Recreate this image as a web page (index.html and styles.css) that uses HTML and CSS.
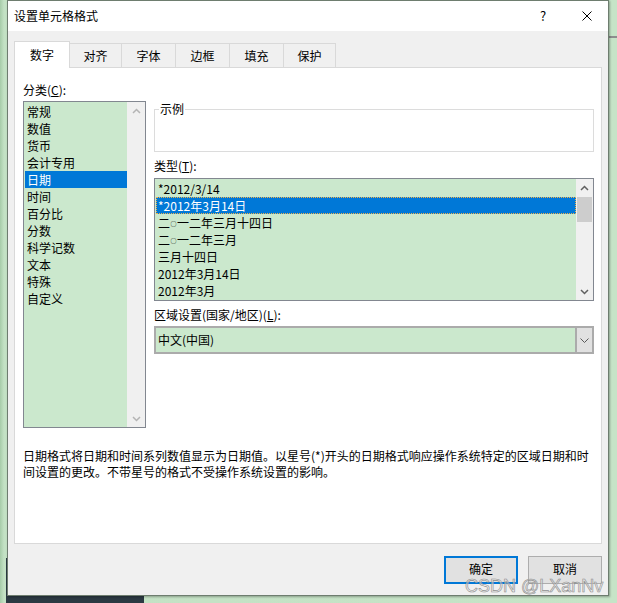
FILE: index.html
```html
<!DOCTYPE html>
<html lang="zh-CN">
<head>
<meta charset="utf-8">
<title>设置单元格格式</title>
<link rel="stylesheet" href="styles.css">
</head>
<body>
<div class="desk">
  <div class="dark-block"></div>
  <div class="side-line"></div>
  <div class="dialog">
    <div class="titlebar">
      <div class="title">设置单元格格式</div>
      <div class="tb-btn tb-help">?</div>
      <div class="tb-btn tb-close">
        <svg width="10" height="10" viewBox="0 0 10 10"><path d="M0.5 0.5 L9.5 9.5 M9.5 0.5 L0.5 9.5" stroke="#000" stroke-width="1" fill="none"/></svg>
      </div>
    </div>
    <div class="main">
      <div class="tabs">
        <div class="tab active">数字</div>
        <div class="tab">对齐</div>
        <div class="tab">字体</div>
        <div class="tab">边框</div>
        <div class="tab">填充</div>
        <div class="tab">保护</div>
      </div>
      <div class="panel">
        <div class="cols">
          <div class="col-left">
            <div class="label">分类(<u>C</u>):</div>
            <div class="listbox cat">
              <div class="items">
                <div class="item">常规</div>
                <div class="item">数值</div>
                <div class="item">货币</div>
                <div class="item">会计专用</div>
                <div class="item sel">日期</div>
                <div class="item">时间</div>
                <div class="item">百分比</div>
                <div class="item">分数</div>
                <div class="item">科学记数</div>
                <div class="item">文本</div>
                <div class="item">特殊</div>
                <div class="item">自定义</div>
              </div>
              <div class="vscroll wide">
                <div class="sb-btn"><svg width="9" height="6" viewBox="0 0 9 6"><polyline points="1,5 4.5,1.5 8,5" fill="none" stroke="#b4b4b4" stroke-width="1.5"/></svg></div>
                <div class="sb-track"></div>
                <div class="sb-btn"><svg width="9" height="6" viewBox="0 0 9 6"><polyline points="1,1 4.5,4.5 8,1" fill="none" stroke="#b4b4b4" stroke-width="1.5"/></svg></div>
              </div>
            </div>
          </div>
          <div class="col-right">
            <fieldset class="sample">
              <legend>示例</legend>
            </fieldset>
            <div class="label gap-top">类型(<u>T</u>):</div>
            <div class="listbox types">
              <div class="items">
                <div class="item">*2012/3/14</div>
                <div class="item sel focus">*2012年3月14日</div>
                <div class="item">二<span class="ring">○</span>一二年三月十四日</div>
                <div class="item">二<span class="ring">○</span>一二年三月</div>
                <div class="item">三月十四日</div>
                <div class="item">2012年3月14日</div>
                <div class="item">2012年3月</div>
              </div>
              <div class="vscroll">
                <div class="sb-btn"><svg width="9" height="6" viewBox="0 0 9 6"><polyline points="1,5 4.5,1.5 8,5" fill="none" stroke="#606060" stroke-width="1.5"/></svg></div>
                <div class="sb-track"><div class="thumb"></div></div>
                <div class="sb-btn"><svg width="9" height="6" viewBox="0 0 9 6"><polyline points="1,1 4.5,4.5 8,1" fill="none" stroke="#606060" stroke-width="1.5"/></svg></div>
              </div>
            </div>
            <div class="label gap-top">区域设置(国家/地区)(<u>L</u>):</div>
            <div class="dropdown">
              <div class="dd-text">中文(中国)</div>
              <div class="dd-btn"><svg width="9" height="5" viewBox="0 0 9 5"><polyline points="0.5,0.5 4.5,4.5 8.5,0.5" fill="none" stroke="#5a5a5a" stroke-width="1"/></svg></div>
            </div>
          </div>
        </div>
        <p class="desc">日期格式将日期和时间系列数值显示为日期值。以星号(*)开头的日期格式响应操作系统特定的区域日期和时间设置的更改。不带星号的格式不受操作系统设置的影响。</p>
      </div>
      <div class="actions">
        <div class="btn default">确定</div>
        <div class="btn">取消</div>
      </div>
    </div>
  </div>
  <div class="watermark">CSDN @LXanNv</div>
</div>
</body>
</html>
```
FILE: styles.css
```css
* { box-sizing: border-box; }

body {
  margin: 0;
  font-family: "Noto Sans CJK SC", "Microsoft YaHei", sans-serif;
  font-size: 12px;
  color: #000;
}

.desk {
  position: relative;
  width: 617px;
  height: 603px;
  overflow: hidden;
  background: linear-gradient(to right, #a6cba8 0, #c3e1c4 4px, #c6e4c7 100%);
}

.dark-block {
  position: absolute;
  left: 6px;
  top: 558px;
  width: 138px;
  height: 45px;
  background: #2b3942;
}

.side-line {
  position: absolute;
  left: 609px;
  top: 36px;
  width: 8px;
  height: 2px;
  background: #8d8d8d;
}

.dialog {
  position: relative;
  z-index: 1;
  margin-left: 7px;
  width: 602px;
  height: 596px;
  background: #f0f0f0;
  border: 1px solid #6e7d6f;
  box-shadow: 1px 1px 2px rgba(0, 0, 0, 0.3);
}

.titlebar {
  height: 30px;
  background: #fff;
  display: flex;
  align-items: center;
}

.title {
  padding-left: 6px;
  line-height: 16px;
}

.tb-btn {
  height: 30px;
  display: flex;
  align-items: center;
  justify-content: center;
  line-height: 16px;
}

.tb-help {
  margin-left: auto;
  width: 46px;
  font-size: 13px;
}

.tb-close {
  width: 42px;
}

.main {
  padding: 10px 6px 0 6px;
}

.tabs {
  display: flex;
  align-items: flex-end;
  height: 27px;
  margin-bottom: -1px;
  position: relative;
  z-index: 2;
}

.tab {
  width: 54px;
  height: 24px;
  margin-bottom: 1px;
  display: flex;
  align-items: center;
  justify-content: center;
  line-height: 16px;
  background: #f0f0f0;
  border-top: 1px solid #d9d9d9;
  border-left: 1px solid #d9d9d9;
}

.tab.active {
  width: 56px;
  height: 27px;
  margin-bottom: 0;
  background: #fff;
  border-right: 1px solid #d9d9d9;
  padding-bottom: 1px;
}

.tab.active + .tab {
  width: 51px;
  border-left: none;
}

.tab:last-child {
  width: 53px;
  border-right: 1px solid #d9d9d9;
}

.panel {
  height: 477px;
  background: #fff;
  border: 1px solid #d9d9d9;
  padding: 13px 6px 0 8px;
}

.cols {
  display: flex;
  gap: 8px;
}

.col-left {
  width: 123px;
}

.col-right {
  width: 440px;
}

.label {
  height: 17px;
  line-height: 17px;
  white-space: nowrap;
}

.label u {
  text-underline-offset: 1px;
}

.gap-top {
  margin-top: 5px;
}

.listbox {
  display: flex;
  border: 1px solid #828790;
  background: #cbe8cd;
}

.listbox.cat {
  margin-top: 3px;
  height: 327px;
}

.listbox.types {
  margin-top: 4px;
  height: 123px;
}

.items {
  flex: 1;
  min-width: 0;
  padding: 1px 0 1px 1px;
}

.item {
  height: 17px;
  line-height: 17px;
  padding-left: 2px;
  white-space: nowrap;
}

.item.sel {
  background: #0078d7;
  color: #fff;
}

.item.focus {
  outline: 1px dotted #f2b24a;
  outline-offset: -1px;
}

.ring {
  font-size: 6px;
  vertical-align: 2px;
  padding: 0 0.5px;
}

.vscroll {
  width: 17px;
  background: #f0f0f0;
  display: flex;
  flex-direction: column;
}

.vscroll.wide {
  width: 18px;
}

.sb-btn {
  height: 17px;
  display: flex;
  align-items: center;
  justify-content: center;
}

.sb-track {
  flex: 1;
  padding: 1px 1px 0 1px;
}

.thumb {
  height: 25px;
  background: #cdcdcd;
}

.sample {
  margin: 22px 0 0 0;
  padding: 0;
  height: 49px;
  border: 1px solid #dcdcdc;
}

.sample legend {
  margin-left: 4px;
  padding: 0 1px;
  line-height: 12px;
  font-size: 12px;
}

.dropdown {
  margin-top: 3px;
  height: 28px;
  display: flex;
  border: 2px solid #ababab;
  background: #cbe8cd;
}

.dd-text {
  flex: 1;
  padding-left: 2px;
  line-height: 24px;
}

.dd-btn {
  width: 17px;
  background: #e1e1e1;
  border-left: 2px solid #ababab;
  display: flex;
  align-items: center;
  justify-content: center;
}

.desc {
  margin: 20px 0 0 0;
  width: 572px;
  line-height: 16px;
}

.actions {
  display: flex;
  justify-content: flex-end;
  gap: 10px;
  padding-top: 12px;
}

.btn {
  width: 74px;
  height: 28px;
  background: #e1e1e1;
  border: 1px solid #adadad;
  display: flex;
  align-items: center;
  justify-content: center;
  line-height: 14px;
  padding-bottom: 2px;
}

.btn.default {
  border: 2px solid #0078d7;
}

.watermark {
  position: absolute;
  z-index: 3;
  left: 465px;
  top: 579px;
  font-family: "Liberation Sans", Arial, sans-serif;
  font-size: 18px;
  line-height: 14px;
  color: rgba(235, 235, 235, 0.55);
  -webkit-text-stroke: 0.6px #8e8e8e;
  white-space: nowrap;
}
```
